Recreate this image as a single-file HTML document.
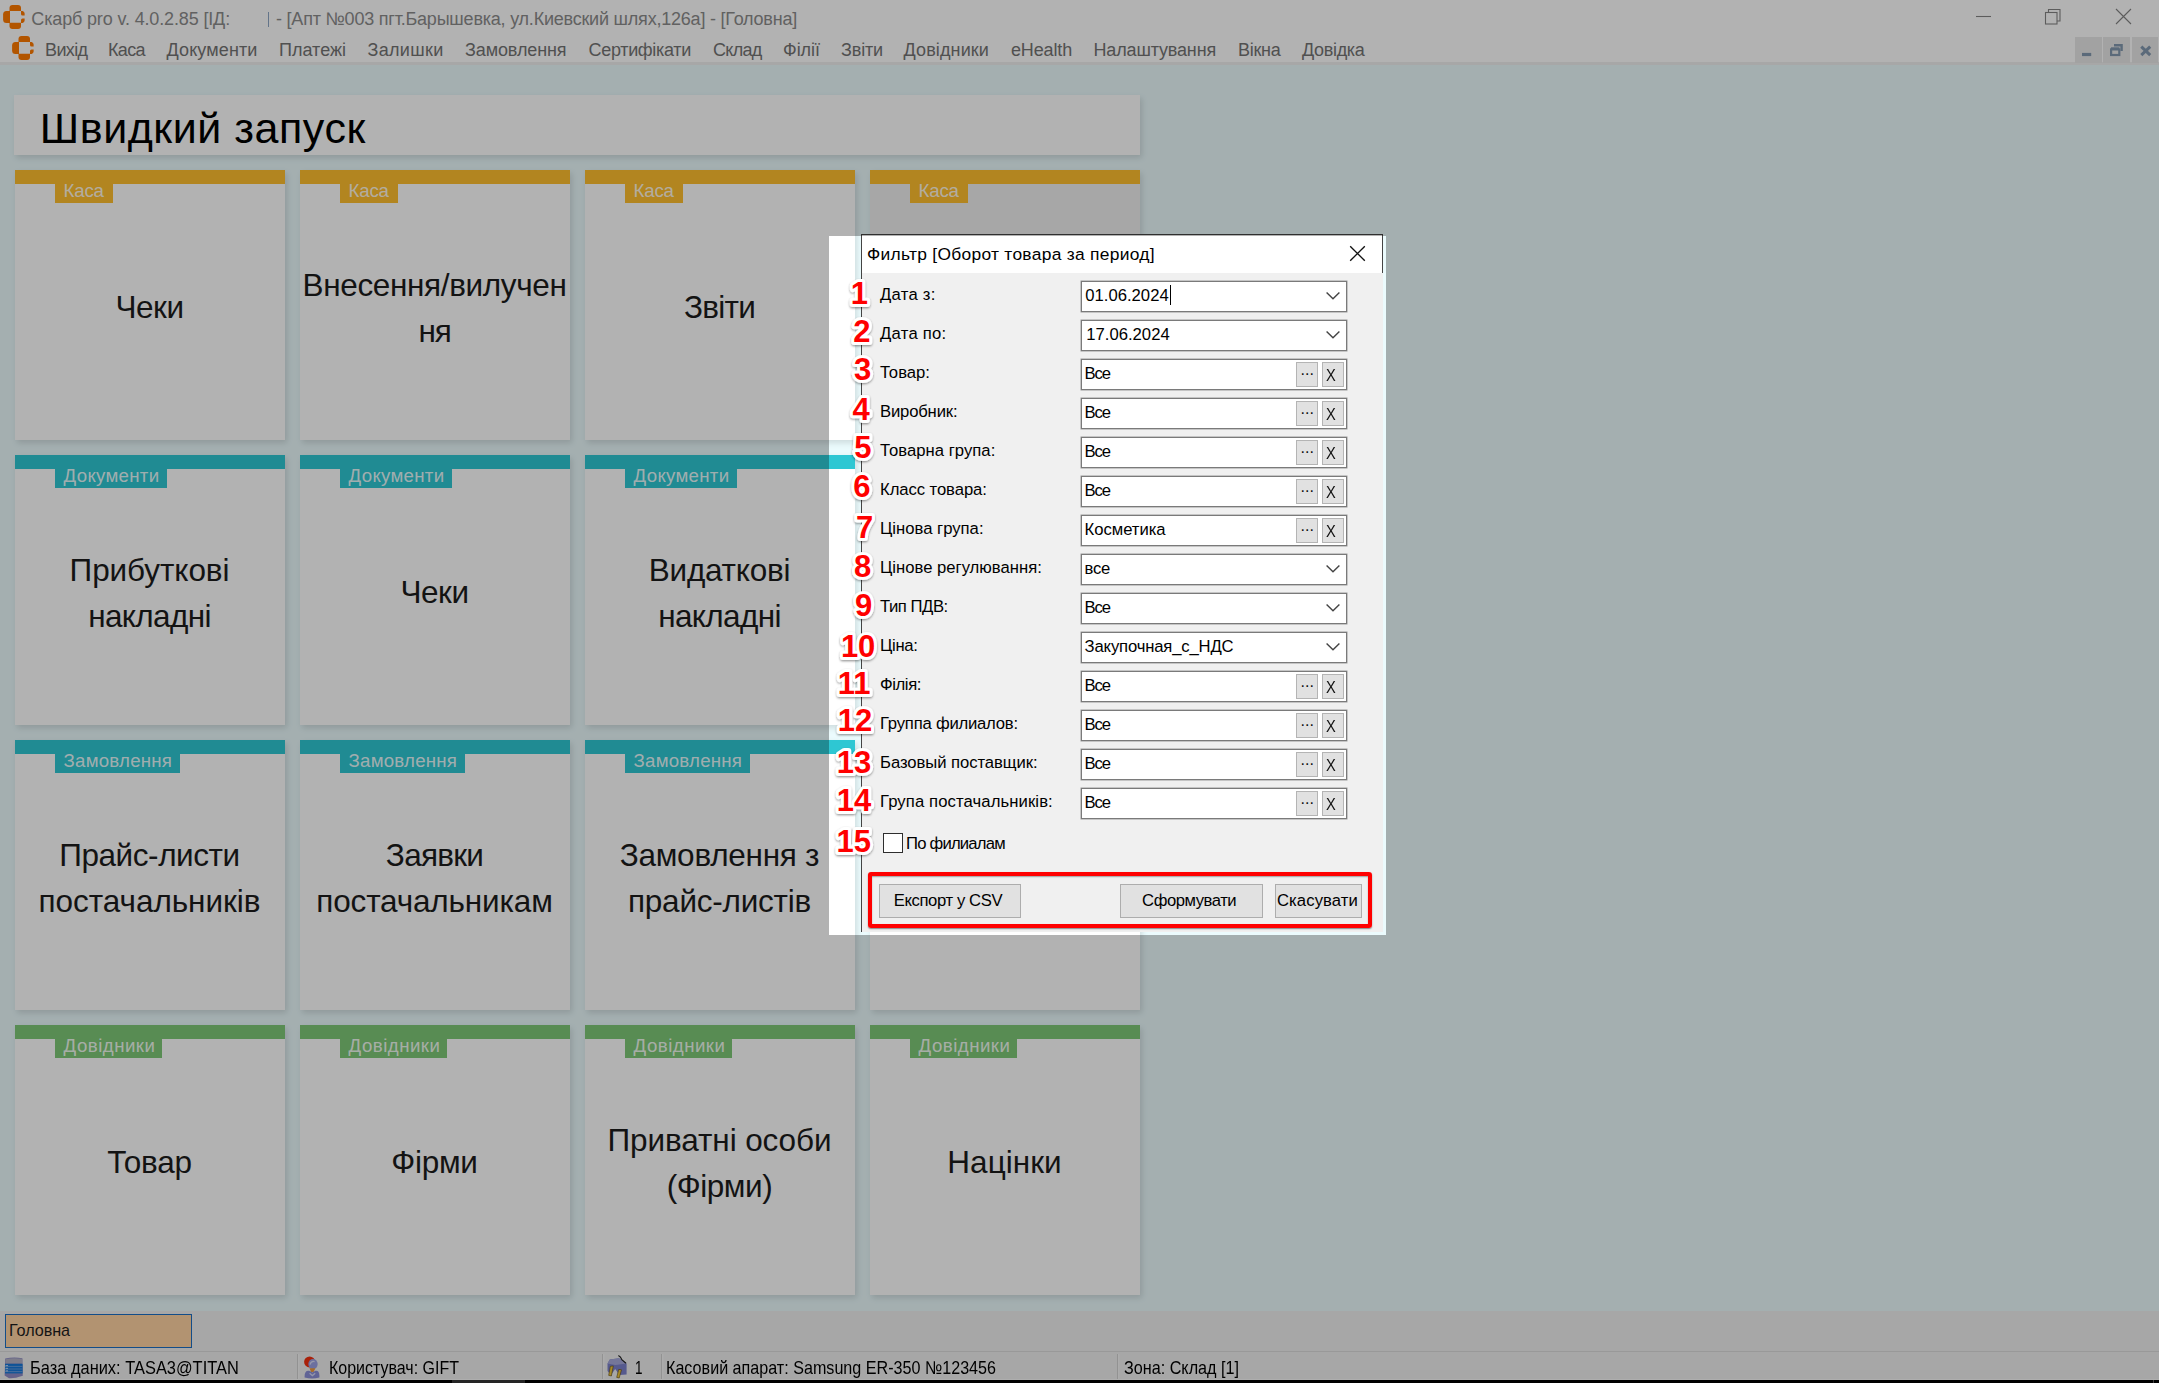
<!DOCTYPE html><html lang="uk"><head><meta charset="utf-8"><title>Скарб pro</title><style>
*{box-sizing:border-box;margin:0;padding:0}
html,body{width:2159px;height:1383px;overflow:hidden}
body{position:relative;background:#ebfbfd;font-family:"Liberation Sans",sans-serif;color:#000}
.t{position:absolute;white-space:nowrap;line-height:1;display:block}
.abs{position:absolute}
#titlebar{left:0;top:0;width:2159px;height:62px;background:#fff}
#menubar{left:0;top:62px;width:2159px;height:3.3px;background:#f0f0f0}
#head{left:13.5px;top:95px;width:1126.5px;height:60px;background:#fff;box-shadow:2px 3px 6px rgba(0,0,0,.125)}
.tile{position:absolute;width:270px;height:270px;background:#fff;box-shadow:2px 3px 6px rgba(0,0,0,.125)}
.tile .band{position:absolute;left:0;top:0;width:270px;height:13.6px}
.tile .tag{position:absolute;left:40.4px;top:13px;height:20px}
.gold .band,.gold .tag{background:#ffbf2e}
.teal .band,.teal .tag{background:#2ec7d3}
.green .band,.green .tag{background:#7ec978}
.hover{background:#f0f0f0}
#tabbar{left:0;top:1310.7px;width:2159px;height:41px;background:#f0f0f0}
#status{left:0;top:1351px;width:2159px;height:29px;background:#f0f0f0;border-top:1.5px solid #dcdcdc;border-bottom:1px solid #fafafa}
#blackbar{left:0;top:1379.7px;width:2159px;height:3.3px;background:#000}
#dim{left:829px;top:236px;width:557px;height:699px;box-shadow:0 0 0 3000px rgba(0,0,0,.30);pointer-events:none}
#dlg{left:861px;top:234px;width:522px;height:698px;background:#f0f0f0}
#dlgtitle{left:0;top:0;width:522px;height:39px;background:#fff;border:1px solid #444;border-bottom:none}
#dlgleft{left:0;top:0;width:1px;height:698px;background:#444}
.inp{position:absolute;left:220px;width:266px;height:31px;background:#fff;border:1px solid #7a7a7a;box-shadow:0 0 0 .5px #9a9a9a}
.sb{position:absolute;top:2px;width:22px;height:24.6px;background:#e1e1e1;border:1px solid #b4b4b4}
.btn{position:absolute;top:650px;height:34px;background:#e1e1e1;border:1px solid #adadad}
.sep{position:absolute;top:1354px;width:1.2px;height:25px;background:#d2d2d2;box-shadow:1.2px 0 0 #f8f8f8}
</style></head><body>
<div id="titlebar" class="abs"></div>
<div id="menubar" class="abs"></div>
<svg class="abs" style="left:3.0px;top:4.8px" width="23" height="25" viewBox="0 0 23 25"><g fill="#ff7a00"><path d="M6.5 6.1V3Q6.5 0 9.5 0H15Q18 0 18 3V6.1Z"/><path d="M6.5 17.8V20.9Q6.5 23.9 9.5 23.9H15Q18 23.9 18 20.9V17.8Z"/><path d="M7 6H3.5Q.1 6 .1 9.5V14.4Q.1 17.9 3.5 17.9H7Z"/><path d="M18 6H19.6Q21.6 6.5 21.6 8.5V10.5H19.5Q18 10.5 18 9Z"/><path d="M18 15Q18 13.5 19.5 13.5H21.6V15.5Q21.6 17.4 19.6 17.9H18Z"/></g></svg>
<svg class="abs" style="left:11.6px;top:36.3px" width="23" height="25" viewBox="0 0 23 25"><g fill="#ff7a00"><path d="M6.5 6.1V3Q6.5 0 9.5 0H15Q18 0 18 3V6.1Z"/><path d="M6.5 17.8V20.9Q6.5 23.9 9.5 23.9H15Q18 23.9 18 20.9V17.8Z"/><path d="M7 6H3.5Q.1 6 .1 9.5V14.4Q.1 17.9 3.5 17.9H7Z"/><path d="M18 6H19.6Q21.6 6.5 21.6 8.5V10.5H19.5Q18 10.5 18 9Z"/><path d="M18 15Q18 13.5 19.5 13.5H21.6V15.5Q21.6 17.4 19.6 17.9H18Z"/></g></svg>
<span class="t" style="left:31.30px;top:10px;font-size:18.00px;letter-spacing:-0.148px;color:#8c8c8c;">Скарб pro v. 4.0.2.85 [ІД:</span>
<div class="abs" style="left:268px;top:12px;width:1px;height:15px;background:#8fa6c4"></div>
<span class="t" style="left:276.00px;top:10px;font-size:18.00px;letter-spacing:-0.215px;color:#8c8c8c;">- [Апт №003 пгт.Барышевка, ул.Киевский шлях,126а] - [Головна]</span>
<svg class="abs" style="left:1970px;top:0" width="189" height="36" viewBox="0 0 189 36" fill="none" stroke="#858585" stroke-width="1.1"><path d="M6 16.5H21"/><rect x="75.5" y="12.5" width="11.5" height="11.5"/><path d="M78.5 12.5V9.5H90V21H87"/><path d="M146 9L161 24M161 9L146 24"/></svg>
<span class="t" style="left:45.00px;top:41px;font-size:18.00px;letter-spacing:-0.613px;color:#737373;">Вихід</span>
<span class="t" style="left:108.00px;top:41px;font-size:18.00px;letter-spacing:-0.627px;color:#737373;">Каса</span>
<span class="t" style="left:166.50px;top:41px;font-size:18.00px;letter-spacing:0.122px;color:#737373;">Документи</span>
<span class="t" style="left:279.00px;top:41px;font-size:18.00px;letter-spacing:0.008px;color:#737373;">Платежі</span>
<span class="t" style="left:367.50px;top:41px;font-size:18.00px;letter-spacing:0.313px;color:#737373;">Залишки</span>
<span class="t" style="left:465.00px;top:41px;font-size:18.00px;letter-spacing:-0.106px;color:#737373;">Замовлення</span>
<span class="t" style="left:588.50px;top:41px;font-size:18.00px;letter-spacing:-0.311px;color:#737373;">Сертифікати</span>
<span class="t" style="left:713.00px;top:41px;font-size:18.00px;letter-spacing:-0.719px;color:#737373;">Склад</span>
<span class="t" style="left:783.00px;top:41px;font-size:18.00px;letter-spacing:-0.037px;color:#737373;">Філії</span>
<span class="t" style="left:841.00px;top:41px;font-size:18.00px;letter-spacing:-0.147px;color:#737373;">Звіти</span>
<span class="t" style="left:903.50px;top:41px;font-size:18.00px;letter-spacing:0.123px;color:#737373;">Довідники</span>
<span class="t" style="left:1011.00px;top:41px;font-size:18.00px;letter-spacing:-0.149px;color:#737373;">eHealth</span>
<span class="t" style="left:1093.50px;top:41px;font-size:18.00px;letter-spacing:-0.159px;color:#737373;">Налаштування</span>
<span class="t" style="left:1238.00px;top:41px;font-size:18.00px;letter-spacing:-0.266px;color:#737373;">Вікна</span>
<span class="t" style="left:1302.00px;top:41px;font-size:18.00px;letter-spacing:-0.321px;color:#737373;">Довідка</span>
<div class="abs" style="left:2075.0px;top:37px;width:26.5px;height:26px;background:#e8e8e8"></div>
<div class="abs" style="left:2103.0px;top:37px;width:26.5px;height:26px;background:#e8e8e8"></div>
<div class="abs" style="left:2131.5px;top:37px;width:26.5px;height:26px;background:#e8e8e8"></div>
<svg class="abs" style="left:2075px;top:37px" width="84" height="26" viewBox="0 0 84 26" fill="none" stroke="#8399af"><path d="M7 17.5H16.2" stroke-width="3.2"/><path d="M39 8.2H46.6V14" stroke-width="2.4"/><rect x="36.1" y="12.4" width="8.2" height="5.6" stroke-width="2.2"/><path d="M36 11.6H44.4" stroke-width="2.6"/><path d="M66.3 9.6L75.2 18.2M75.2 9.6L66.3 18.2" stroke-width="3"/></svg>
<div id="head" class="abs"></div>
<span class="t" style="left:39.80px;top:107px;font-size:43.00px;letter-spacing:0.542px;">Швидкий запуск</span>
<div class="tile gold" style="left:15px;top:170px"><div class="band"></div><div class="tag" style="width:57.3px"></div></div>
<span class="t" style="left:63.60px;top:182px;font-size:18.67px;letter-spacing:-0.194px;color:rgba(255,255,255,.9);">Каса</span>
<span class="t" style="left:115.45px;top:292px;font-size:31.50px;letter-spacing:-0.448px;color:#1c1c1c;">Чеки</span>
<div class="tile gold" style="left:300px;top:170px"><div class="band"></div><div class="tag" style="width:57.3px"></div></div>
<span class="t" style="left:348.60px;top:182px;font-size:18.67px;letter-spacing:-0.194px;color:rgba(255,255,255,.9);">Каса</span>
<span class="t" style="left:302.50px;top:270px;font-size:31.50px;letter-spacing:-0.349px;color:#1c1c1c;">Внесення/вилучен</span>
<span class="t" style="left:418.50px;top:316px;font-size:31.50px;letter-spacing:-1.227px;color:#1c1c1c;">ня</span>
<div class="tile gold" style="left:585px;top:170px"><div class="band"></div><div class="tag" style="width:57.3px"></div></div>
<span class="t" style="left:633.60px;top:182px;font-size:18.67px;letter-spacing:-0.194px;color:rgba(255,255,255,.9);">Каса</span>
<span class="t" style="left:683.90px;top:292px;font-size:31.50px;letter-spacing:-0.716px;color:#1c1c1c;">Звіти</span>
<div class="tile gold hover" style="left:870px;top:170px"><div class="band"></div><div class="tag" style="width:57.3px"></div></div>
<span class="t" style="left:918.60px;top:182px;font-size:18.67px;letter-spacing:-0.194px;color:rgba(255,255,255,.9);">Каса</span>
<div class="tile teal" style="left:15px;top:455px"><div class="band"></div><div class="tag" style="width:111.2px"></div></div>
<span class="t" style="left:63.60px;top:467px;font-size:18.67px;letter-spacing:0.294px;color:rgba(255,255,255,.9);">Документи</span>
<span class="t" style="left:69.60px;top:555px;font-size:31.50px;letter-spacing:-0.087px;color:#1c1c1c;">Прибуткові</span>
<span class="t" style="left:88.25px;top:601px;font-size:31.50px;letter-spacing:-0.653px;color:#1c1c1c;">накладні</span>
<div class="tile teal" style="left:300px;top:455px"><div class="band"></div><div class="tag" style="width:111.2px"></div></div>
<span class="t" style="left:348.60px;top:467px;font-size:18.67px;letter-spacing:0.294px;color:rgba(255,255,255,.9);">Документи</span>
<span class="t" style="left:400.45px;top:577px;font-size:31.50px;letter-spacing:-0.448px;color:#1c1c1c;">Чеки</span>
<div class="tile teal" style="left:585px;top:455px"><div class="band"></div><div class="tag" style="width:111.2px"></div></div>
<span class="t" style="left:633.60px;top:467px;font-size:18.67px;letter-spacing:0.294px;color:rgba(255,255,255,.9);">Документи</span>
<span class="t" style="left:648.76px;top:555px;font-size:31.50px;letter-spacing:-0.239px;color:#1c1c1c;">Видаткові</span>
<span class="t" style="left:658.25px;top:601px;font-size:31.50px;letter-spacing:-0.653px;color:#1c1c1c;">накладні</span>
<div class="tile teal" style="left:15px;top:740px"><div class="band"></div><div class="tag" style="width:124.6px"></div></div>
<span class="t" style="left:63.60px;top:752px;font-size:18.67px;letter-spacing:0.222px;color:rgba(255,255,255,.9);">Замовлення</span>
<span class="t" style="left:59.20px;top:840px;font-size:31.50px;letter-spacing:-0.424px;color:#1c1c1c;">Прайс-листи</span>
<span class="t" style="left:38.60px;top:886px;font-size:31.50px;letter-spacing:-0.047px;color:#1c1c1c;">постачальників</span>
<div class="tile teal" style="left:300px;top:740px"><div class="band"></div><div class="tag" style="width:124.6px"></div></div>
<span class="t" style="left:348.60px;top:752px;font-size:18.67px;letter-spacing:0.222px;color:rgba(255,255,255,.9);">Замовлення</span>
<span class="t" style="left:385.85px;top:840px;font-size:31.50px;letter-spacing:-0.736px;color:#1c1c1c;">Заявки</span>
<span class="t" style="left:316.35px;top:886px;font-size:31.50px;letter-spacing:-0.163px;color:#1c1c1c;">постачальникам</span>
<div class="tile teal" style="left:585px;top:740px"><div class="band"></div><div class="tag" style="width:124.6px"></div></div>
<span class="t" style="left:633.60px;top:752px;font-size:18.67px;letter-spacing:0.222px;color:rgba(255,255,255,.9);">Замовлення</span>
<span class="t" style="left:619.68px;top:840px;font-size:31.50px;letter-spacing:-0.253px;color:#1c1c1c;">Замовлення з</span>
<span class="t" style="left:627.99px;top:886px;font-size:31.50px;letter-spacing:-0.232px;color:#1c1c1c;">прайс-листів</span>
<div class="tile teal" style="left:870px;top:740px"><div class="band"></div><div class="tag" style="width:124.6px"></div></div>
<span class="t" style="left:918.60px;top:752px;font-size:18.67px;letter-spacing:0.222px;color:rgba(255,255,255,.9);">Замовлення</span>
<div class="tile green" style="left:15px;top:1025px"><div class="band"></div><div class="tag" style="width:106.5px"></div></div>
<span class="t" style="left:63.60px;top:1037px;font-size:18.67px;letter-spacing:0.485px;color:rgba(255,255,255,.9);">Довідники</span>
<span class="t" style="left:107.28px;top:1147px;font-size:31.50px;letter-spacing:-0.257px;color:#1c1c1c;">Товар</span>
<div class="tile green" style="left:300px;top:1025px"><div class="band"></div><div class="tag" style="width:106.5px"></div></div>
<span class="t" style="left:348.60px;top:1037px;font-size:18.67px;letter-spacing:0.485px;color:rgba(255,255,255,.9);">Довідники</span>
<span class="t" style="left:391.30px;top:1147px;font-size:31.50px;letter-spacing:-0.263px;color:#1c1c1c;">Фірми</span>
<div class="tile green" style="left:585px;top:1025px"><div class="band"></div><div class="tag" style="width:106.5px"></div></div>
<span class="t" style="left:633.60px;top:1037px;font-size:18.67px;letter-spacing:0.485px;color:rgba(255,255,255,.9);">Довідники</span>
<span class="t" style="left:607.50px;top:1125px;font-size:31.50px;letter-spacing:-0.094px;color:#1c1c1c;">Приватні особи</span>
<span class="t" style="left:666.70px;top:1171px;font-size:31.50px;letter-spacing:-0.442px;color:#1c1c1c;">(Фірми)</span>
<div class="tile green" style="left:870px;top:1025px"><div class="band"></div><div class="tag" style="width:106.5px"></div></div>
<span class="t" style="left:918.60px;top:1037px;font-size:18.67px;letter-spacing:0.485px;color:rgba(255,255,255,.9);">Довідники</span>
<span class="t" style="left:947.25px;top:1147px;font-size:31.50px;letter-spacing:0.060px;color:#1c1c1c;">Націнки</span>
<div id="tabbar" class="abs"></div>
<div class="abs" style="left:5px;top:1314px;width:187px;height:34px;background:#ffd3a3;border:1.6px solid #1c6fc4"></div>
<span class="t" style="left:9.00px;top:1322px;font-size:16.20px;letter-spacing:-0.078px;color:#1e1e1e;">Головна</span>
<div id="status" class="abs"></div>
<div class="sep" style="left:297px"></div>
<div class="sep" style="left:602px"></div>
<div class="sep" style="left:661px"></div>
<div class="sep" style="left:1117px"></div>
<svg class="abs" style="left:4px;top:1356.5px" width="20" height="22" viewBox="0 0 20 22"><path d="M1.2 1.6Q9 -.2 18.4 1.2L18.8 18.8Q10 21.8 5 21.2L.6 18.6Z" fill="#8f8cc6"/><path d="M1.6 2.2Q9 .4 18.2 1.8V6.6H1.4Z" fill="#b3b2c6"/><rect x="1" y="6.8" width="17.6" height="9.6" fill="#1678d8"/><path d="M1 9.4H18.6M1 12H18.6M1 14.6H18.6" stroke="#7aa5df" stroke-width=".8"/><path d="M1.6 8.6H4M1.6 11.3H4M1.6 13.9H4" stroke="#d6e6fa" stroke-width=".9"/></svg>
<svg class="abs" style="left:303px;top:1355px" width="18" height="24" viewBox="0 0 18 24"><circle cx="6.6" cy="6.9" r="5.5" fill="#f2300f"/><ellipse cx="10" cy="9.1" rx="4.7" ry="5.1" fill="#9ba1e4"/><path d="M7 9.6Q8 5.8 11.6 6.6" stroke="#d9dcf6" stroke-width="1.2" fill="none"/><path d="M6.4 13.2H12.4L10.6 17H8.2Z" fill="#f29a38"/><path d="M1.6 22.6C1.2 15.6 4.6 14.2 9.4 17.4C14 14.2 16.8 15.6 16.4 22.6Q9 24.6 1.6 22.6Z" fill="#8a8fd6"/><path d="M6.6 18.2L9.4 20.6L12.2 18.2" stroke="#d4d7f4" stroke-width="1.3" fill="none"/></svg>
<svg class="abs" style="left:606px;top:1354px" width="22" height="25" viewBox="0 0 22 25"><path d="M1.5 9.4L3.8 5.6L13 4.2L20.6 9.6V20.6L13.4 21L9.2 15L5 21L1.5 17Z" fill="#7c82cc"/><path d="M3.8 5.6L13 4.2L20.6 9.6L9.4 11L1.5 9.4Z" fill="#a7aadc"/><path d="M4.3 12.3L7.3 11.9L5.4 22L2.7 21.4Z" fill="#efc63a" stroke="#5a4510" stroke-width=".6"/><path d="M12.7 15.4L15.5 15.8L13.2 24L10.7 23.4Z" fill="#efc63a" stroke="#5a4510" stroke-width=".6"/><path d="M12.4 1.6Q14.8 3 15.8 5.6L20 9.2" stroke="#222" stroke-width="1.2" fill="none"/></svg>
<span class="t" style="left:30.0px;top:1359px;font-size:18.5px;transform-origin:0 0;transform:scaleX(0.8871)">База даних: TASA3@TITAN</span>
<span class="t" style="left:328.8px;top:1359px;font-size:18.5px;transform-origin:0 0;transform:scaleX(0.8642)">Користувач: GIFT</span>
<span class="t" style="left:635.0px;top:1359px;font-size:18.5px;transform-origin:0 0;transform:scaleX(0.7289)">1</span>
<span class="t" style="left:666.0px;top:1359px;font-size:18.5px;transform-origin:0 0;transform:scaleX(0.8714)">Касовий апарат: Samsung ER-350 №123456</span>
<span class="t" style="left:1124.0px;top:1359px;font-size:18.5px;transform-origin:0 0;transform:scaleX(0.8745)">Зона: Склад [1]</span>
<div id="blackbar" class="abs"></div>
<div class="abs" style="left:452px;top:1380px;width:73px;height:3px;background:#353535"></div>
<div class="abs" style="left:2152.5px;top:1380px;width:1.6px;height:3px;background:#5a5a5a"></div>
<div id="dlg" class="abs">
<div id="dlgtitle" class="abs"></div><div id="dlgleft" class="abs"></div>
</div>
<span class="t" style="left:867.00px;top:246px;font-size:17.40px;letter-spacing:0.290px;">Фильтр [Оборот товара за период]</span>
<svg class="abs" style="left:1349px;top:245px" width="17" height="17" viewBox="0 0 17 17" fill="none" stroke="#111" stroke-width="1.35"><path d="M1.2 1.2L15.8 15.8M15.8 1.2L1.2 15.8"/></svg>
<span class="t" style="left:880.00px;top:287px;font-size:16.67px;letter-spacing:0.254px;">Дата з:</span>
<div class="inp" style="left:1081px;top:281px">
</div>
<span class="t" style="left:1085.30px;top:288px;font-size:16.67px;">01.06.2024</span>
<svg class="abs" style="left:1325px;top:291px" width="16" height="10" viewBox="0 0 16 10" fill="none" stroke="#444" stroke-width="1.4"><path d="M1.6 1.4L8 7.8L14.4 1.4"/></svg>
<span class="t" style="left:880.00px;top:326px;font-size:16.67px;letter-spacing:0.253px;">Дата по:</span>
<div class="inp" style="left:1081px;top:320px">
</div>
<span class="t" style="left:1086.30px;top:327px;font-size:16.67px;">17.06.2024</span>
<svg class="abs" style="left:1325px;top:330px" width="16" height="10" viewBox="0 0 16 10" fill="none" stroke="#444" stroke-width="1.4"><path d="M1.6 1.4L8 7.8L14.4 1.4"/></svg>
<span class="t" style="left:880.00px;top:365px;font-size:16.67px;">Товар:</span>
<div class="inp" style="left:1081px;top:359px">
<div class="sb" style="left:214px"></div><div class="sb" style="left:239.6px"></div>
</div>
<span class="t" style="left:1084.60px;top:366px;font-size:16.67px;letter-spacing:-1.142px;">Все</span>
<span class="t" style="left:1300.50px;top:362px;font-size:16.00px;color:#111;">...</span>
<span class="t" style="left:1325.90px;top:368px;font-size:16.67px;color:#111;transform-origin:0 0;transform:scaleX(.88);">X</span>
<span class="t" style="left:880.00px;top:404px;font-size:16.67px;letter-spacing:-0.174px;">Виробник:</span>
<div class="inp" style="left:1081px;top:398px">
<div class="sb" style="left:214px"></div><div class="sb" style="left:239.6px"></div>
</div>
<span class="t" style="left:1084.60px;top:405px;font-size:16.67px;letter-spacing:-1.142px;">Все</span>
<span class="t" style="left:1300.50px;top:401px;font-size:16.00px;color:#111;">...</span>
<span class="t" style="left:1325.90px;top:407px;font-size:16.67px;color:#111;transform-origin:0 0;transform:scaleX(.88);">X</span>
<span class="t" style="left:880.00px;top:443px;font-size:16.67px;letter-spacing:0.036px;">Товарна група:</span>
<div class="inp" style="left:1081px;top:437px">
<div class="sb" style="left:214px"></div><div class="sb" style="left:239.6px"></div>
</div>
<span class="t" style="left:1084.60px;top:444px;font-size:16.67px;letter-spacing:-1.142px;">Все</span>
<span class="t" style="left:1300.50px;top:440px;font-size:16.00px;color:#111;">...</span>
<span class="t" style="left:1325.90px;top:446px;font-size:16.67px;color:#111;transform-origin:0 0;transform:scaleX(.88);">X</span>
<span class="t" style="left:880.00px;top:482px;font-size:16.67px;letter-spacing:-0.072px;">Класс товара:</span>
<div class="inp" style="left:1081px;top:476px">
<div class="sb" style="left:214px"></div><div class="sb" style="left:239.6px"></div>
</div>
<span class="t" style="left:1084.60px;top:483px;font-size:16.67px;letter-spacing:-1.142px;">Все</span>
<span class="t" style="left:1300.50px;top:479px;font-size:16.00px;color:#111;">...</span>
<span class="t" style="left:1325.90px;top:485px;font-size:16.67px;color:#111;transform-origin:0 0;transform:scaleX(.88);">X</span>
<span class="t" style="left:880.00px;top:521px;font-size:16.67px;letter-spacing:0.007px;">Цінова група:</span>
<div class="inp" style="left:1081px;top:515px">
<div class="sb" style="left:214px"></div><div class="sb" style="left:239.6px"></div>
</div>
<span class="t" style="left:1084.60px;top:522px;font-size:16.67px;letter-spacing:-0.041px;">Косметика</span>
<span class="t" style="left:1300.50px;top:518px;font-size:16.00px;color:#111;">...</span>
<span class="t" style="left:1325.90px;top:524px;font-size:16.67px;color:#111;transform-origin:0 0;transform:scaleX(.88);">X</span>
<span class="t" style="left:880.00px;top:560px;font-size:16.67px;">Цінове регулювання:</span>
<div class="inp" style="left:1081px;top:554px">
</div>
<span class="t" style="left:1084.60px;top:561px;font-size:16.67px;letter-spacing:-0.325px;">все</span>
<svg class="abs" style="left:1325px;top:564px" width="16" height="10" viewBox="0 0 16 10" fill="none" stroke="#444" stroke-width="1.4"><path d="M1.6 1.4L8 7.8L14.4 1.4"/></svg>
<span class="t" style="left:880.00px;top:599px;font-size:16.67px;letter-spacing:-0.455px;">Тип ПДВ:</span>
<div class="inp" style="left:1081px;top:593px">
</div>
<span class="t" style="left:1084.60px;top:600px;font-size:16.67px;letter-spacing:-1.142px;">Все</span>
<svg class="abs" style="left:1325px;top:603px" width="16" height="10" viewBox="0 0 16 10" fill="none" stroke="#444" stroke-width="1.4"><path d="M1.6 1.4L8 7.8L14.4 1.4"/></svg>
<span class="t" style="left:880.00px;top:638px;font-size:16.67px;letter-spacing:-0.309px;">Ціна:</span>
<div class="inp" style="left:1081px;top:632px">
</div>
<span class="t" style="left:1084.60px;top:639px;font-size:16.67px;letter-spacing:-0.158px;">Закупочная_с_НДС</span>
<svg class="abs" style="left:1325px;top:642px" width="16" height="10" viewBox="0 0 16 10" fill="none" stroke="#444" stroke-width="1.4"><path d="M1.6 1.4L8 7.8L14.4 1.4"/></svg>
<span class="t" style="left:880.00px;top:677px;font-size:16.67px;letter-spacing:-0.411px;">Філія:</span>
<div class="inp" style="left:1081px;top:671px">
<div class="sb" style="left:214px"></div><div class="sb" style="left:239.6px"></div>
</div>
<span class="t" style="left:1084.60px;top:678px;font-size:16.67px;letter-spacing:-1.142px;">Все</span>
<span class="t" style="left:1300.50px;top:674px;font-size:16.00px;color:#111;">...</span>
<span class="t" style="left:1325.90px;top:680px;font-size:16.67px;color:#111;transform-origin:0 0;transform:scaleX(.88);">X</span>
<span class="t" style="left:880.00px;top:716px;font-size:16.67px;letter-spacing:-0.217px;">Группа филиалов:</span>
<div class="inp" style="left:1081px;top:710px">
<div class="sb" style="left:214px"></div><div class="sb" style="left:239.6px"></div>
</div>
<span class="t" style="left:1084.60px;top:717px;font-size:16.67px;letter-spacing:-1.142px;">Все</span>
<span class="t" style="left:1300.50px;top:713px;font-size:16.00px;color:#111;">...</span>
<span class="t" style="left:1325.90px;top:719px;font-size:16.67px;color:#111;transform-origin:0 0;transform:scaleX(.88);">X</span>
<span class="t" style="left:880.00px;top:755px;font-size:16.67px;letter-spacing:-0.055px;">Базовый поставщик:</span>
<div class="inp" style="left:1081px;top:749px">
<div class="sb" style="left:214px"></div><div class="sb" style="left:239.6px"></div>
</div>
<span class="t" style="left:1084.60px;top:756px;font-size:16.67px;letter-spacing:-1.142px;">Все</span>
<span class="t" style="left:1300.50px;top:752px;font-size:16.00px;color:#111;">...</span>
<span class="t" style="left:1325.90px;top:758px;font-size:16.67px;color:#111;transform-origin:0 0;transform:scaleX(.88);">X</span>
<span class="t" style="left:880.00px;top:794px;font-size:16.67px;letter-spacing:0.105px;">Група постачальників:</span>
<div class="inp" style="left:1081px;top:788px">
<div class="sb" style="left:214px"></div><div class="sb" style="left:239.6px"></div>
</div>
<span class="t" style="left:1084.60px;top:795px;font-size:16.67px;letter-spacing:-1.142px;">Все</span>
<span class="t" style="left:1300.50px;top:791px;font-size:16.00px;color:#111;">...</span>
<span class="t" style="left:1325.90px;top:797px;font-size:16.67px;color:#111;transform-origin:0 0;transform:scaleX(.88);">X</span>
<div class="abs" style="left:1169.5px;top:285px;width:1.3px;height:20px;background:#000"></div>
<div class="abs" style="left:883px;top:833px;width:20px;height:20px;background:#fff;border:1.7px solid #2e2e2e"></div>
<span class="t" style="left:906.00px;top:836px;font-size:16.67px;letter-spacing:-0.789px;">По филиалам</span>
<div class="btn" style="left:879px;top:884px;width:142px"></div>
<span class="t" style="left:893.70px;top:893px;font-size:16.67px;letter-spacing:-0.388px;">Експорт у CSV</span>
<div class="btn" style="left:1120px;top:884px;width:143px"></div>
<span class="t" style="left:1142.10px;top:893px;font-size:16.67px;letter-spacing:-0.460px;">Сформувати</span>
<div class="btn" style="left:1275px;top:884px;width:87px"></div>
<span class="t" style="left:1277.00px;top:893px;font-size:16.67px;letter-spacing:0.093px;">Скасувати</span>
<div class="abs" style="left:868px;top:872px;width:504px;height:55.5px;border:4px solid #f00;border-radius:3px;box-shadow:0 1px 1.5px rgba(0,0,0,.45), inset 0 1px 1.5px rgba(0,0,0,.35)"></div>
<svg class="abs" style="left:820px;top:270px;overflow:visible" width="80" height="600" font-family="Liberation Sans, sans-serif" font-weight="bold" font-size="31" text-anchor="end">
<defs><filter id="ds" x="-30%" y="-30%" width="160%" height="170%"><feDropShadow dx="0" dy="1.2" stdDeviation="1.0" flood-color="#000" flood-opacity=".42"/></filter></defs>
<g filter="url(#ds)"><text x="47.88" y="33.51" fill="#fff" stroke="#fff" stroke-width="6" stroke-linejoin="round">1</text></g><text x="47.88" y="33.51" fill="#f00">1</text>
<g filter="url(#ds)"><text x="50.54" y="71.53" fill="#fff" stroke="#fff" stroke-width="6" stroke-linejoin="round">2</text></g><text x="50.54" y="71.53" fill="#f00">2</text>
<g filter="url(#ds)"><text x="51.35" y="109.65" fill="#fff" stroke="#fff" stroke-width="6" stroke-linejoin="round">3</text></g><text x="51.35" y="109.65" fill="#f00">3</text>
<g filter="url(#ds)"><text x="49.79" y="149.67" fill="#fff" stroke="#fff" stroke-width="6" stroke-linejoin="round">4</text></g><text x="49.79" y="149.67" fill="#f00">4</text>
<g filter="url(#ds)"><text x="51.38" y="188.38" fill="#fff" stroke="#fff" stroke-width="6" stroke-linejoin="round">5</text></g><text x="51.38" y="188.38" fill="#f00">5</text>
<g filter="url(#ds)"><text x="50.62" y="227.01" fill="#fff" stroke="#fff" stroke-width="6" stroke-linejoin="round">6</text></g><text x="50.62" y="227.01" fill="#f00">6</text>
<g filter="url(#ds)"><text x="53.32" y="268.35" fill="#fff" stroke="#fff" stroke-width="6" stroke-linejoin="round">7</text></g><text x="53.32" y="268.35" fill="#f00">7</text>
<g filter="url(#ds)"><text x="51.28" y="307.02" fill="#fff" stroke="#fff" stroke-width="6" stroke-linejoin="round">8</text></g><text x="51.28" y="307.02" fill="#f00">8</text>
<g filter="url(#ds)"><text x="52.25" y="345.67" fill="#fff" stroke="#fff" stroke-width="6" stroke-linejoin="round">9</text></g><text x="52.25" y="345.67" fill="#f00">9</text>
<g filter="url(#ds)"><text x="55.36" y="387.05" fill="#fff" stroke="#fff" stroke-width="6" stroke-linejoin="round">10</text></g><text x="55.36" y="387.05" fill="#f00">10</text>
<g filter="url(#ds)"><text x="50.58" y="423.64" fill="#fff" stroke="#fff" stroke-width="6" stroke-linejoin="round">11</text></g><text x="50.58" y="423.64" fill="#f00">11</text>
<g filter="url(#ds)"><text x="52.18" y="460.74" fill="#fff" stroke="#fff" stroke-width="6" stroke-linejoin="round">12</text></g><text x="52.18" y="460.74" fill="#f00">12</text>
<g filter="url(#ds)"><text x="51.35" y="503.05" fill="#fff" stroke="#fff" stroke-width="6" stroke-linejoin="round">13</text></g><text x="51.35" y="503.05" fill="#f00">13</text>
<g filter="url(#ds)"><text x="51.24" y="540.63" fill="#fff" stroke="#fff" stroke-width="6" stroke-linejoin="round">14</text></g><text x="51.24" y="540.63" fill="#f00">14</text>
<g filter="url(#ds)"><text x="51.08" y="581.51" fill="#fff" stroke="#fff" stroke-width="6" stroke-linejoin="round">15</text></g><text x="51.08" y="581.51" fill="#f00">15</text>
</svg>
<div id="dim" class="abs"></div>
</body></html>
